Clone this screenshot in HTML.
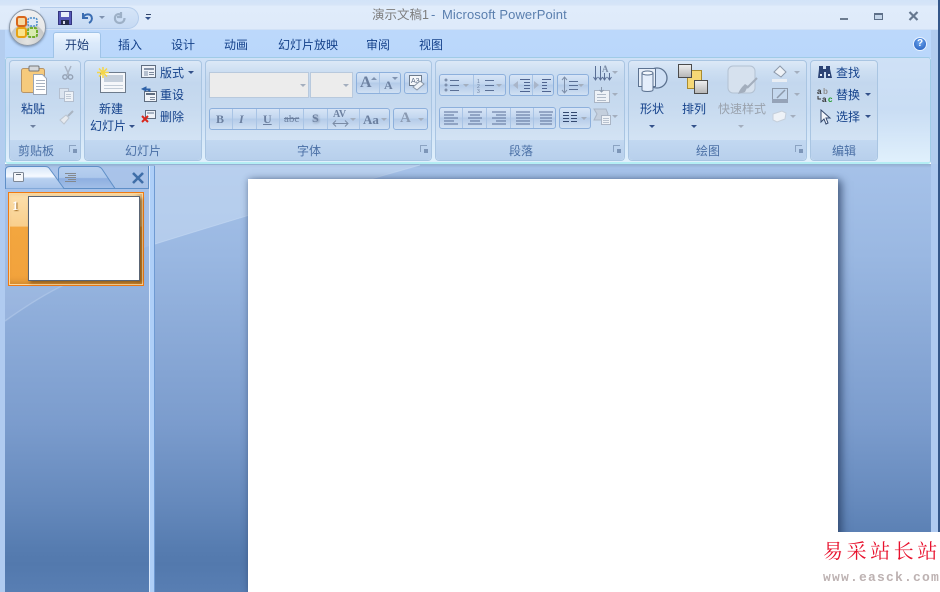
<!DOCTYPE html>
<html><head><meta charset="utf-8">
<style>
html,body{margin:0;padding:0}
body{width:940px;height:592px;overflow:hidden;position:relative;background:#fff;font-family:"Liberation Sans","Noto Sans CJK SC",sans-serif;font-size:12px;color:#15428b}
.a,.t,svg{position:absolute}
svg.c{shape-rendering:crispEdges}
.t{white-space:nowrap;line-height:14px}
.tab{top:38px;font-size:12px}
.g{position:absolute;top:60px;height:101px;border:1px solid #a9c5e2;border-radius:4px;box-sizing:border-box;background:linear-gradient(#dce9f7 0,#cddff2 10px,#c3d7ee 22px,#c7daef 45px,#d3e3f4 80px)}
.g i{position:absolute;left:0;right:0;bottom:0;height:20px;background:linear-gradient(#c2d8f1,#b8d0ec);border-radius:0 0 4px 4px}
.gl{top:144px;color:#4a6fa5;font-size:12px}
.btn{position:absolute;border:1px solid #8db0dc;border-radius:3px;box-sizing:border-box;background:linear-gradient(#d7e5f6,#c2d6ef 45%,#b4cbe8 50%,#d0e0f3)}
.sep{position:absolute;top:0;bottom:0;width:1px;background:#a9c4e5}
.dd{position:absolute;width:0;height:0;border-left:3px solid transparent;border-right:3px solid transparent;border-top:3px solid #8093b0}
.dk{border-top-color:#33518a}
.lt{border-top-color:#a3aebe}
.inp{position:absolute;background:#ececec;border:1px solid #b8c9dd;box-sizing:border-box}
.gi{color:#6b7f9f;font-family:"Liberation Serif",serif;font-weight:bold}
.dlg{position:absolute;width:7px;height:7px;border-left:1px solid #8ba3c2;border-top:1px solid #8ba3c2;box-sizing:border-box}
.dlg:after{content:"";position:absolute;right:-1px;bottom:-1px;width:4px;height:4px;background:#7d96b8}
</style></head><body>

<!-- title bar -->
<div class="a" style="left:0;top:0;width:940px;height:31px;background:linear-gradient(#d2e3f8 0,#d6e5f8 5px,#e0ecfb 6px,#deeafa 29px,#c5d9f2 30px)"></div>
<!-- tab strip -->
<div class="a" style="left:0;top:30px;width:940px;height:28px;background:linear-gradient(#bcd8fb,#bad7fb)"></div>
<div class="a" style="left:0;top:30px;width:5px;height:140px;background:#b3cdef"></div>
<div class="a" style="left:931px;top:30px;width:9px;height:140px;background:#b3cdef"></div>
<!-- ribbon bg -->
<div class="a" style="left:5px;top:57px;width:926px;height:107px;background:linear-gradient(#cfe1f6,#c9ddf4 50%,#e0f0fc);border:1px solid #a0cbe6;border-bottom:2px solid #b4eef4;border-radius:3px;box-sizing:border-box"></div>

<!-- quick access -->
<div class="a" style="left:40px;top:7px;width:99px;height:22px;border:1px solid #b4cceb;border-left:0;border-radius:0 12px 12px 0;box-sizing:border-box;background:linear-gradient(#d6e5f8,#c6daf3)"></div>
<svg style="left:57px;top:10px" width="16" height="16"><rect x="1.500" y="1.500" width="13" height="13" fill="#5658b8" stroke="#34367e"/><rect x="4" y="2" width="8" height="5" fill="#e8eefa"/><rect x="4" y="10" width="8" height="5" fill="#262c48"/><rect x="6" y="11" width="2" height="3" fill="#d8dce8"/></svg>
<svg style="left:80px;top:10px" width="15" height="15"><path d="M3 3v5h5M3 7.500C5 3.500 10 3.500 11.500 6.500c1 2.500 0 5-2.500 6.500" fill="none" stroke="#3a6db2" stroke-width="2"/></svg>
<div class="dd" style="left:99px;top:16px"></div>
<svg style="left:112px;top:10px" width="15" height="15"><path d="M9 2v5h-4M9.500 5.500C7 3 3.500 4 3 7.500c-.4 3 1.500 5.500 4.500 5.500S12.500 11 12.500 8" fill="none" stroke="#9db0c6" stroke-width="2.200"/></svg>
<div class="a" style="left:146px;top:14px;width:5px;height:1px;background:#33466a"></div>
<div class="dd dk" style="left:145px;top:17px"></div>

<!-- office button -->
<div class="a" style="left:9px;top:9px;width:37px;height:37px;border-radius:50%;border:1px solid #8b98a8;box-sizing:border-box;background:radial-gradient(circle at 50% 90%,#e4e4e2 0,#c6c8c8 50%,#e8e8e8 52%,#f3f3f3 100%);box-shadow:0 1px 2px rgba(60,80,110,.5)"></div>
<svg style="left:15px;top:15px" width="25" height="25">
<rect x="2" y="2" width="9" height="9" rx="2" fill="#f7d9a0" stroke="#d8651a" stroke-width="2"/>
<rect x="13" y="3" width="9" height="8" rx="2" fill="#dfe9f6" stroke="#4d8ec8" stroke-width="1.500" stroke-dasharray="2 1"/>
<rect x="2" y="13" width="9" height="9" rx="2" fill="#fbe38a" stroke="#e8a213" stroke-width="2"/>
<rect x="13" y="13" width="9" height="9" rx="2" fill="#d8eab0" stroke="#71ad2b" stroke-width="2" stroke-dasharray="3 1"/>
</svg>

<!-- title -->
<div class="t" style="left:372px;top:8px;color:#7c7c7c;font-size:12.500px">演示文稿1</div>
<div class="t" style="left:431px;top:8px;color:#5a7fae;font-size:13px">-</div>
<div class="t" style="left:442px;top:8px;color:#5a7fae;font-size:13px;letter-spacing:.1px">Microsoft PowerPoint</div>

<!-- window buttons -->
<div class="a" style="left:840px;top:18px;width:8px;height:2px;background:#6c7c90"></div>
<div class="a" style="left:874px;top:13px;width:9px;height:7px;border:1px solid #5d6f88;border-top:2px solid #5d6f88;box-sizing:border-box;background:#c5d6ea"></div>
<svg style="left:908px;top:11px" width="11" height="10"><path d="M1.500 1L9.500 9M9.500 1L1.500 9" stroke="#66788f" stroke-width="2.200"/></svg>

<!-- tabs -->
<div class="a" style="left:53px;top:32px;width:48px;height:26px;border:1px solid #9fc3e8;border-bottom:0;border-radius:3px 3px 0 0;box-sizing:border-box;background:linear-gradient(#f0f7ff,#dcebfb 40%,#cfe1f6)"></div>
<div class="t tab" style="left:65px;color:#1f3f78">开始</div>
<div class="t tab" style="left:118px">插入</div>
<div class="t tab" style="left:171px">设计</div>
<div class="t tab" style="left:224px">动画</div>
<div class="t tab" style="left:278px">幻灯片放映</div>
<div class="t tab" style="left:366px">审阅</div>
<div class="t tab" style="left:419px">视图</div>
<div class="a" style="left:913px;top:37px;width:14px;height:14px;border-radius:50%;background:radial-gradient(circle at 50% 35%,#6fa8f0,#1c56b8);border:1px solid #e8f2ff;box-sizing:border-box;color:#fff;font:bold 10px/12px 'Liberation Sans',sans-serif;text-align:center">?</div>

<!-- groups -->
<div class="g" style="left:9px;width:72px"><i></i></div>
<div class="g" style="left:84px;width:118px"><i></i></div>
<div class="g" style="left:205px;width:227px"><i></i></div>
<div class="g" style="left:435px;width:190px"><i></i></div>
<div class="g" style="left:628px;width:179px"><i></i></div>
<div class="g" style="left:810px;width:68px"><i></i></div>

<div class="t gl" style="left:18px">剪贴板</div>
<div class="t gl" style="left:125px">幻灯片</div>
<div class="t gl" style="left:297px">字体</div>
<div class="t gl" style="left:509px">段落</div>
<div class="t gl" style="left:696px">绘图</div>
<div class="t gl" style="left:832px">编辑</div>
<div class="dlg" style="left:69px;top:145px"></div>
<div class="dlg" style="left:420px;top:145px"></div>
<div class="dlg" style="left:613px;top:145px"></div>
<div class="dlg" style="left:795px;top:145px"></div>

<!-- clipboard -->
<svg style="left:20px;top:64px" width="30" height="34">
<rect x="1.500" y="4.500" width="23" height="24" rx="2" fill="#f6ca7c" stroke="#b79468"/>
<rect x="9" y="2" width="10" height="5" rx="1" fill="#d5d8dc" stroke="#777"/>
<path d="M13.500 10.500h9l4 4v16h-13z" fill="#fff" stroke="#9aa5b5"/>
<path d="M16 16.500h9M16 19.500h9M16 22.500h9M16 25.500h9" stroke="#a8b2c0"/>
</svg>
<div class="t" style="left:21px;top:102px">粘贴</div>
<div class="dd" style="left:30px;top:125px;border-top-color:#6d80a0"></div>
<svg style="left:60px;top:65px" width="16" height="16"><path d="M5 1l4 9M11 1L7 10" stroke="#a9b4c4" stroke-width="1.500"/><circle cx="5" cy="12" r="2.200" fill="none" stroke="#94a1b4" stroke-width="1.400"/><circle cx="10.500" cy="12" r="2.200" fill="none" stroke="#94a1b4" stroke-width="1.400"/></svg>
<svg style="left:58px;top:87px" width="17" height="15"><rect x="1.500" y="1.500" width="9" height="10" fill="#dbe4ef" stroke="#b4bfcf"/><rect x="6.500" y="4.500" width="9" height="10" fill="#eef2f7" stroke="#b4bfcf"/><path d="M8 7.500h5M8 9.500h5M8 11.500h5" stroke="#c0c9d5"/></svg>
<svg style="left:58px;top:109px" width="17" height="16"><path d="M10 7l5-5" stroke="#aab4c2" stroke-width="2"/><path d="M2 11l6-5 3 3-5 6z" fill="#e6eaef" stroke="#bcc5d0"/></svg>

<!-- slides -->
<svg style="left:96px;top:66px" width="34" height="30">
<rect x="4.500" y="6.500" width="25" height="20" fill="#f5f7fa" stroke="#6d7b8c"/><rect x="8" y="9" width="19" height="7" fill="#c6d0dc"/><path d="M8 19.500h19M8 22.500h19" stroke="#c3cdd8"/>
<g stroke="#f4d64a" stroke-width="1.500"><path d="M7 1v11M1 6.500h12M3 2.500l8 8M11 2.500l-8 8"/></g></svg>
<div class="t" style="left:99px;top:102px">新建</div>
<div class="t" style="left:90px;top:119px">幻灯片</div>
<div class="dd dk" style="left:129px;top:125px"></div>
<svg style="left:141px;top:65px" width="16" height="14"><rect x=".5" y=".5" width="14" height="12" fill="#eef2f8" stroke="#5f6d80"/><rect x="3" y="3" width="10" height="2" fill="#8794a8"/><rect x="3" y="6" width="4" height="5" fill="#b5c0cf"/><path d="M8 7.500h5M8 9.500h5" stroke="#7d8a9d"/></svg>
<div class="t" style="left:160px;top:66px">版式</div>
<div class="dd dk" style="left:188px;top:71px"></div>
<svg style="left:141px;top:86px" width="17" height="17"><rect x="3.500" y="5.500" width="12" height="10" fill="#f0f4f9" stroke="#5f6d80"/><path d="M5 8h9" stroke="#5f6d80" stroke-width="2"/><path d="M9 11.500h5M9 13.500h5" stroke="#7d8a9d"/><path d="M1 3l4-2v4zM4 3h5v3" fill="#2f62a8" stroke="#2f62a8"/></svg>
<div class="t" style="left:160px;top:88px">重设</div>
<svg style="left:141px;top:109px" width="16" height="15"><rect x="4.500" y="1.500" width="10" height="8" fill="#eef2f8" stroke="#5f6d80"/><rect x="6" y="3" width="7" height="2" fill="#a8b4c4"/><path d="M1 7l6 6M7 7l-6 6" stroke="#d9261c" stroke-width="2"/></svg>
<div class="t" style="left:160px;top:110px">删除</div>

<!-- font -->
<div class="inp" style="left:209px;top:72px;width:100px;height:26px"></div>
<div class="dd lt" style="left:300px;top:84px"></div>
<div class="inp" style="left:310px;top:72px;width:43px;height:26px"></div>
<div class="dd lt" style="left:343px;top:84px"></div>
<div class="btn" style="left:356px;top:72px;width:45px;height:22px"><div class="sep" style="left:22px"></div></div>
<div class="t gi" style="left:360px;top:76px;font-size:16px">A</div>
<div class="t gi" style="left:384px;top:78px;font-size:12px">A</div>
<div class="dd" style="left:371px;top:77px;border-top:0;border-bottom:3px solid #8093b0"></div>
<div class="dd" style="left:392px;top:77px"></div>
<div class="btn" style="left:404px;top:72px;width:24px;height:22px"></div>
<svg style="left:407px;top:74px" width="19" height="18"><rect x="2.500" y="1.500" width="12" height="10" fill="#f5f7fa" stroke="#6d7b8c"/><text x="4" y="9" font-family="Liberation Sans" font-size="7" fill="#5a6b85">A3</text><path d="M6 13l7-6 4 3-7 6z" fill="#eef2f7" stroke="#8a97a8"/></svg>

<div class="btn" style="left:209px;top:108px;width:181px;height:22px">
<div class="sep" style="left:22px"></div><div class="sep" style="left:46px"></div><div class="sep" style="left:69px"></div><div class="sep" style="left:93px"></div><div class="sep" style="left:117px"></div><div class="sep" style="left:149px"></div></div>
<div class="t gi" style="left:216px;top:112px;font-size:12px">B</div>
<div class="t gi" style="left:239px;top:112px;font-size:12px;font-style:italic">I</div>
<div class="t gi" style="left:263px;top:112px;font-size:12px;text-decoration:underline">U</div>
<div class="t gi" style="left:284px;top:112px;font-size:11px;text-decoration:line-through;font-weight:normal">abc</div>
<div class="t gi" style="left:312px;top:111px;font-size:12px;text-shadow:1px 1px 2px #7d8ca5">S</div>
<div class="t gi" style="left:333px;top:108px;font-size:10px">AV</div>
<svg style="left:332px;top:119px" width="18" height="8"><path d="M1 4.500h15M4 1.500L1 4.500l3 3M13 1.500l3 3-3 3" fill="none" stroke="#7a8ba5"/></svg>
<div class="dd lt" style="left:350px;top:118px"></div>
<div class="t gi" style="left:363px;top:113px;font-size:13px">Aa</div>
<div class="dd lt" style="left:381px;top:118px"></div>
<div class="btn" style="left:393px;top:108px;width:35px;height:22px"></div>
<div class="t gi" style="left:400px;top:111px;font-size:15px;color:#8a9ab2">A</div>
<div class="dd lt" style="left:418px;top:118px"></div>

<!-- paragraph -->
<div class="btn" style="left:439px;top:74px;width:67px;height:22px"><div class="sep" style="left:33px"></div></div>
<svg style="left:443px;top:77px" width="60" height="16"><g fill="#7e90ad"><circle cx="3" cy="3" r="1.500"/><circle cx="3" cy="8" r="1.500"/><circle cx="3" cy="13" r="1.500"/></g><path d="M7 3.500h9M7 8.500h9M7 13.500h9M42 3.500h9M42 8.500h9M42 13.500h9" stroke="#5a6f95"/><text x="34" y="6" font-size="5" fill="#6b7f9f" font-family="Liberation Sans">1</text><text x="34" y="11" font-size="5" fill="#6b7f9f" font-family="Liberation Sans">2</text><text x="34" y="16" font-size="5" fill="#6b7f9f" font-family="Liberation Sans">3</text></svg>
<div class="dd lt" style="left:463px;top:84px"></div>
<div class="dd lt" style="left:496px;top:84px"></div>
<div class="btn" style="left:509px;top:74px;width:45px;height:22px"><div class="sep" style="left:22px"></div></div>
<svg style="left:512px;top:77px" width="40" height="16"><path d="M8 2.500h10M12 5.500h6M12 8.500h6M12 11.500h6M8 14.500h10M30 2.500h9M30 5.500h5M30 8.500h5M30 11.500h5M30 14.500h9" stroke="#4f6490"/><path d="M1 8l5-4v8zM27 8l-5-4v8z" fill="#a9b5c9"/></svg>
<div class="btn" style="left:557px;top:74px;width:32px;height:22px"></div>
<svg style="left:561px;top:76px" width="18" height="18"><path d="M3.500 1v16M1 4l2.500-3 2.500 3M1 14l2.500 3 2.500-3" fill="none" stroke="#7e8fa9"/><path d="M8 5.500h9M8 9.500h9M8 13.500h9" stroke="#5a6f95"/></svg>
<div class="dd lt" style="left:578px;top:84px"></div>
<svg style="left:593px;top:64px" width="20" height="18"><path d="M2.500 2v14M7.500 2v14M11.500 9v7M16.500 9v7M.5 13l2 3 2-3M5.500 13l2 3 2-3M9.500 13l2 3 2-3M14.500 13l2 3 2-3" fill="none" stroke="#5a6f95"/><text x="9" y="8" font-size="9" fill="#7d8ea8" font-family="Liberation Serif" font-weight="bold">A</text></svg>
<div class="dd lt" style="left:612px;top:71px"></div>
<svg style="left:593px;top:87px" width="18" height="17"><rect x="1.500" y="3.500" width="15" height="12" fill="#eef2f7" stroke="#aab5c5"/><path d="M4 7.500h9M4 10.500h9M4 13.500h9" stroke="#b0bac8"/><path d="M8.500 0v5M6.500 3l2 2 2-2" fill="none" stroke="#8a9ab0"/></svg>
<div class="dd lt" style="left:612px;top:93px"></div>
<svg style="left:593px;top:108px" width="19" height="18"><path d="M1 1h12l2 5-3 6H1l3-6z" fill="#c4cfdd" stroke="#aab5c5"/><rect x="8.500" y="7.500" width="9" height="9" fill="#eef2f7" stroke="#aab5c5"/><path d="M10 10.500h6M10 12.500h6M10 14.500h6" stroke="#b8c2cf"/></svg>
<div class="dd lt" style="left:612px;top:115px"></div>

<div class="btn" style="left:439px;top:107px;width:117px;height:22px"><div class="sep" style="left:22px"></div><div class="sep" style="left:46px"></div><div class="sep" style="left:70px"></div><div class="sep" style="left:93px"></div></div>
<svg class="c" style="left:442px;top:110px" width="112" height="16" stroke="#5a6f98" fill="none">
<path d="M2 2h14M2 5h10M2 8h14M2 11h10M2 14h14"/>
<path d="M26 2h14M28 5h10M26 8h14M28 11h10M26 14h14"/>
<path d="M50 2h14M54 5h10M50 8h14M54 11h10M50 14h14"/>
<path d="M74 2h14M74 5h14M74 8h14M74 11h14M74 14h14"/>
<path d="M98 5h12M98 8h12M98 11h12M98 14h12M97 2h14" />
</svg>
<div class="btn" style="left:559px;top:107px;width:32px;height:22px"></div>
<svg style="left:563px;top:111px" width="14" height="14" stroke="#33486f"><path d="M0 1.500h6M0 4.500h6M0 7.500h6M0 10.500h6M8 1.500h6M8 4.500h6M8 7.500h6M8 10.500h6"/></svg>
<div class="dd lt" style="left:581px;top:117px"></div>

<!-- drawing -->
<svg style="left:637px;top:64px" width="32" height="32">
<circle cx="20" cy="14" r="10" fill="#cfe0f5" stroke="#5c7290" stroke-width="1.300"/>
<rect x="1.500" y="4.500" width="17" height="18" fill="#e6eef8" stroke="#5c7290"/>
<path d="M5 9v17c0 2 11 2 11 0V9" fill="#e4eefb" stroke="#5c7290"/><ellipse cx="10.500" cy="9" rx="5.500" ry="2" fill="#f5f9fe" stroke="#5c7290"/>
</svg>
<div class="t" style="left:640px;top:102px">形状</div>
<div class="dd dk" style="left:649px;top:125px"></div>
<svg style="left:678px;top:64px" width="33" height="33">
<defs><linearGradient id="gr" x1="0" y1="0" x2="0" y2="1"><stop offset="0" stop-color="#f0f0f0"/><stop offset="1" stop-color="#b5b5b5"/></linearGradient></defs>
<rect x="9.500" y="6.500" width="14" height="18" fill="#f6d876" stroke="#a98b2f"/>
<rect x=".5" y=".5" width="13" height="13" fill="url(#gr)" stroke="#4b4b4b"/>
<rect x="16.500" y="16.500" width="13" height="13" fill="url(#gr)" stroke="#4b4b4b"/>
</svg>
<div class="t" style="left:682px;top:102px">排列</div>
<div class="dd dk" style="left:691px;top:125px"></div>
<svg style="left:727px;top:65px" width="34" height="32"><rect x="1" y="1" width="27" height="27" rx="5" fill="#d6e1ee" stroke="#b3c1d2"/><path d="M30 13L20 23" stroke="#a3aebd" stroke-width="2"/><path d="M21 21l-3 6-7 2c2-5 4-7 7-10z" fill="#a3aebd"/></svg>
<div class="t" style="left:718px;top:102px;color:#9aa2ad">快速样式</div>
<div class="dd lt" style="left:738px;top:125px"></div>
<svg style="left:771px;top:64px" width="18" height="18"><path d="M3 8l6-6 6 6-5 5z" fill="#eef2f7" stroke="#8d99aa"/><rect x="1" y="15" width="15" height="3" fill="#e9eef4"/></svg>
<div class="dd lt" style="left:794px;top:71px"></div>
<svg style="left:771px;top:87px" width="18" height="17"><rect x="1.500" y="1.500" width="15" height="11" fill="none" stroke="#8d99aa"/><path d="M6 11l8-8" stroke="#8d99aa" stroke-width="1.500"/><rect x="1" y="12" width="16" height="4" fill="#95a3b8"/></svg>
<div class="dd lt" style="left:794px;top:93px"></div>
<svg style="left:771px;top:109px" width="17" height="16"><path d="M2 5l9-3 4 2-1 6-8 3-4-2z" fill="#eef2f7" stroke="#c5cfdb"/></svg>
<div class="dd lt" style="left:790px;top:115px"></div>

<!-- editing -->
<svg style="left:817px;top:65px" width="16" height="15" fill="#2b4374"><path d="M2 1h4v3h3V1h4v3l2 9H9V7H7v6H1l1-9z"/><rect x="3" y="9" width="2" height="2" fill="#e6eef8"/><rect x="11" y="9" width="2" height="2" fill="#e6eef8"/></svg>
<div class="t" style="left:836px;top:66px">查找</div>
<svg style="left:817px;top:87px" width="17" height="17"><text x="0" y="7" font-family="Liberation Sans" font-weight="bold" font-size="8" fill="#303030">a</text><text x="6" y="7" font-family="Liberation Sans" font-weight="bold" font-size="8" fill="#909090">b</text><text x="5" y="15" font-family="Liberation Sans" font-weight="bold" font-size="8" fill="#303030">a</text><text x="11" y="15" font-family="Liberation Sans" font-weight="bold" font-size="8" fill="#1f9b28">c</text><path d="M1 9v3h3" fill="none" stroke="#303030"/></svg>
<div class="t" style="left:836px;top:88px">替换</div>
<div class="dd dk" style="left:865px;top:93px"></div>
<svg style="left:820px;top:109px" width="12" height="16"><path d="M1 1v12l3-3 2 5 2-1-2-5h4z" fill="#f2f5fa" stroke="#34496e"/></svg>
<div class="t" style="left:836px;top:110px">选择</div>
<div class="dd dk" style="left:865px;top:115px"></div>

<!-- main background -->
<div class="a" style="left:0;top:164px;width:940px;height:428px;background:linear-gradient(#a6c2e9 0,#9ab8e2 90px,#8dacd9 160px,#7b9ccd 260px,#6589bc 340px,#567cb0 385px,#5379ad 400px,#587eb3 428px)"></div>
<div class="a" style="left:0;top:164px;width:940px;height:4px;background:linear-gradient(#93aed0,#a6c2e9)"></div>
<svg style="left:0;top:164px" width="940" height="428">
<path d="M155 80Q300 35 420 1H155z" fill="#c4d8f2" opacity=".6"/>
<path d="M155 80Q300 35 420 1" fill="none" stroke="#c6daf3" stroke-width="1" opacity=".6"/>
<path d="M5 157Q70 112 149 82V2H5z" fill="#b9cfee" opacity=".22"/>
<path d="M5 157Q40 132 66 120" fill="none" stroke="#b8cdeb" stroke-width="1.500" opacity=".5"/>
</svg>
<!-- side strips -->
<div class="a" style="left:0;top:164px;width:5px;height:428px;background:#b0cbf0"></div>
<div class="a" style="left:931px;top:164px;width:7px;height:428px;background:#afcaf0"></div>
<div class="a" style="left:938px;top:0;width:2px;height:532px;background:#34578a"></div>
<!-- splitter -->
<div class="a" style="left:149px;top:166px;width:6px;height:426px;background:#aecff8;border-left:1px solid #dbe9fb;border-right:1px solid #6f9ad2;box-sizing:border-box"></div>
<!-- panel tabs -->
<div class="a" style="left:5px;top:166px;width:144px;height:23px;border-right:1px solid #5f8fc7;border-bottom:1px solid #5f8fc7;box-sizing:border-box"></div>
<svg style="left:5px;top:165px" width="145" height="24">
<defs>
<linearGradient id="tb1" x1="0" y1="0" x2="0" y2="1"><stop offset="0" stop-color="#d6e5f8"/><stop offset=".45" stop-color="#f6faff"/><stop offset=".55" stop-color="#b9d1f0"/><stop offset="1" stop-color="#a6c3ea"/></linearGradient>
<linearGradient id="tb2" x1="0" y1="0" x2="0" y2="1"><stop offset="0" stop-color="#b8d0ef"/><stop offset=".5" stop-color="#adc8ec"/><stop offset=".55" stop-color="#8eafe0"/><stop offset="1" stop-color="#a2bfe8"/></linearGradient>
</defs>
<path d="M58 23.500L53.500 17V5Q53.500 1.500 57 1.500H92Q95 1.500 97 4L110 23.500z" fill="url(#tb2)" stroke="#5f8fc7"/>
<path d="M59 23.500L44 3Q43 1.500 40 1.500H5Q.5 1.500 .5 5V23.500" fill="url(#tb1)" stroke="#5f8fc7"/>
<rect x="8.500" y="7.500" width="10" height="9" rx="1" fill="#f5f7fa" stroke="#7e8896"/><rect x="11" y="9" width="5" height="1" fill="#5e6876"/>
<g stroke="#84898f"><path d="M60 8.500h11M63 10.500h8M60 12.500h11M63 14.500h8M60 16.500h11"/></g>
<path d="M128 8l10 10M138 8l-10 10" stroke="#3f6ea8" stroke-width="2.600"/>
</svg>
<!-- thumb -->
<div class="a" style="left:8px;top:192px;width:136px;height:94px;box-sizing:border-box;border:1px solid #f07a12;background:linear-gradient(#fce0ad 0,#f9cf8d 36%,#f3a63f 37%,#f1a23c 100%);box-shadow:inset 0 0 0 1px #fbd79c"></div>
<div class="a" style="left:10px;top:194px;width:132px;height:90px;box-shadow:inset -4px -2px 6px rgba(120,70,10,.3)"></div>
<div class="t" style="left:12px;top:199px;color:#fff;font:bold 13px/14px 'Liberation Serif',serif;text-shadow:1px 1px 1px #a06a20">1</div>
<div class="a" style="left:28px;top:196px;width:112px;height:85px;background:#fff;border:1px solid #5a6575;box-sizing:border-box;box-shadow:2px 2px 3px rgba(90,55,10,.6)"></div>

<!-- slide -->
<div class="a" style="left:248px;top:179px;width:590px;height:413px;background:#fff;box-shadow:0 0 6px rgba(50,70,105,.4),4px 2px 8px rgba(30,50,85,.6)"></div>

<!-- watermark -->
<div class="a" style="left:838px;top:532px;width:102px;height:60px;background:#fff"></div>
<div class="t" style="left:823px;top:538px;font-family:'Noto Serif CJK SC','WenQuanYi Zen Hei',serif;color:#e8112d;font-size:20px;line-height:24px;letter-spacing:3.600px;font-weight:400;width:130px">易采站长站</div>
<div class="t" style="left:823px;top:570px;font-family:'Liberation Mono',monospace;color:#bdb2b2;font-size:13px;line-height:15px;letter-spacing:1.200px;font-weight:bold">www.easck.com</div>

</body></html>
